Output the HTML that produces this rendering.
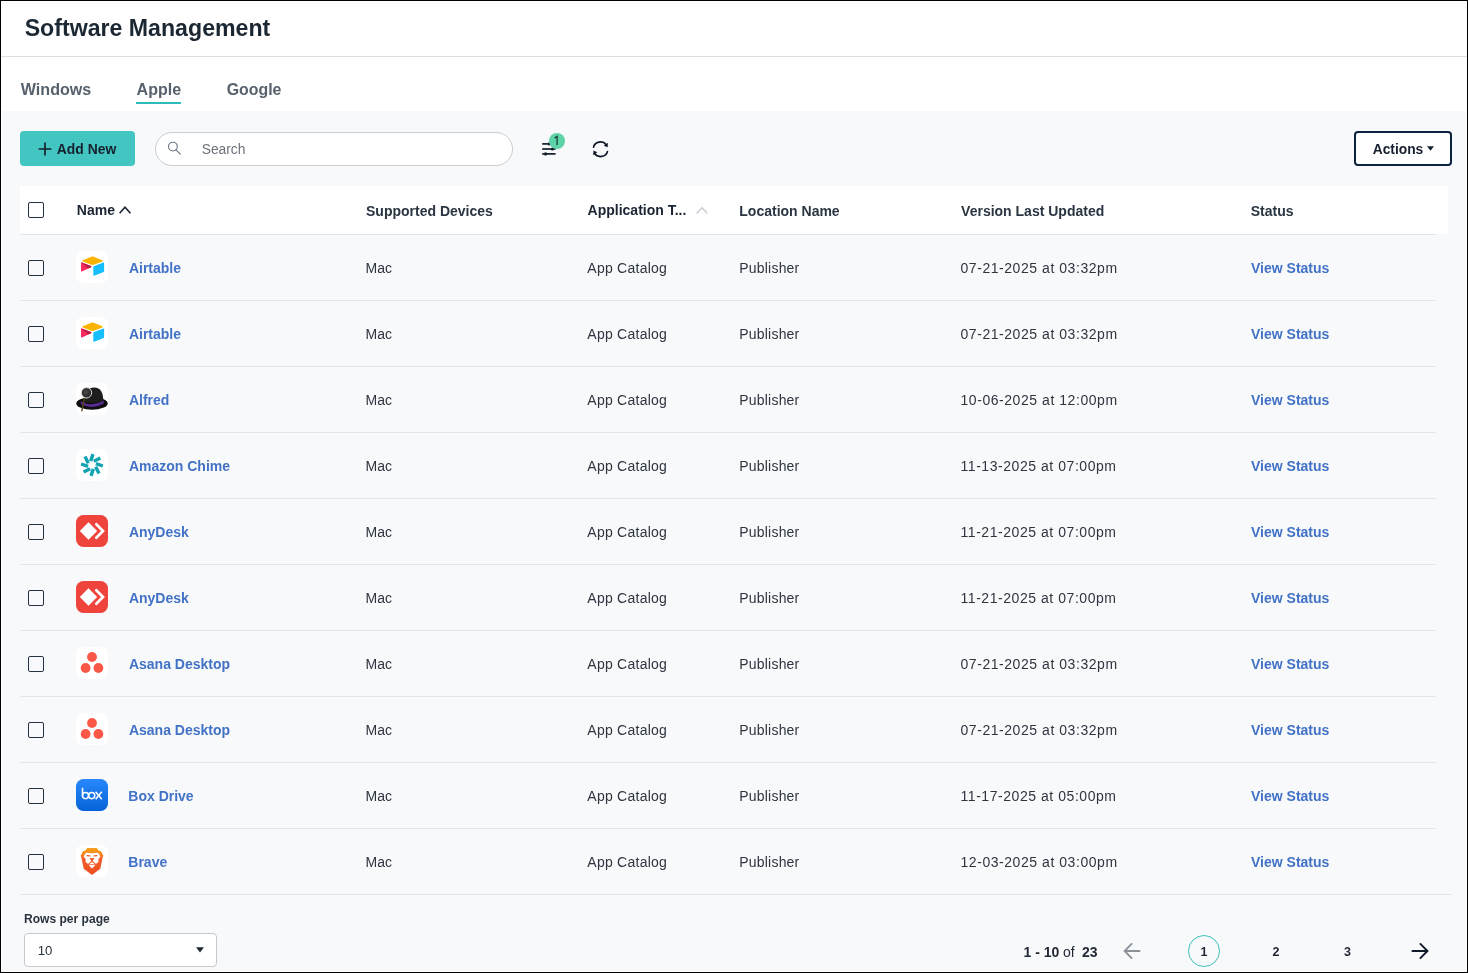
<!DOCTYPE html><html><head><meta charset="utf-8"><style>
*{box-sizing:border-box;margin:0;padding:0}
html,body{width:1468px;height:973px;overflow:hidden;background:#fff}
body{font-family:"Liberation Sans",sans-serif;position:relative}
#frame{position:absolute;left:0;top:0;width:1468px;height:973px;border:1px solid #000;background:#fff}
.abs{position:absolute}
.t{position:absolute;white-space:nowrap}
#wrap{position:absolute;left:0;top:0;width:1468px;height:973px;will-change:transform}
.ico{position:absolute}
.cb{position:absolute;width:16px;height:16px;border:1.5px solid #243142;border-radius:2px;background:transparent}
.hl{position:absolute;height:1px;background:#e1e7e9}
</style></head><body><div id="wrap"><div id="frame"></div>
<div class="abs" style="left:1px;top:56px;width:1466px;height:1px;background:#dcdee1"></div>
<div class="abs" style="left:136px;top:102px;width:45px;height:2px;background:#2dbdb9"></div>
<div class="abs" style="left:2px;top:111px;width:1464px;height:860px;background:#f8f9fb"></div>
<div class="abs" style="left:20px;top:131px;width:115px;height:35px;background:#43c6c2;border-radius:4px"></div>
<svg class="abs" style="left:38px;top:141.5px" width="14" height="14" viewBox="0 0 14 14"><path d="M7 0.6V13.4M0.6 7H13.4" stroke="#17202e" stroke-width="1.7"/></svg>
<div class="abs" style="left:155px;top:132px;width:358px;height:34px;background:#fff;border:1px solid #c9ccd0;border-radius:17px"></div>
<svg class="abs" style="left:166px;top:140px" width="17" height="17" viewBox="0 0 17 17"><circle cx="6.9" cy="6.6" r="4.4" fill="none" stroke="#6f7a86" stroke-width="1.15"/><path d="M10.1 9.8L14.3 14.2" stroke="#6f7a86" stroke-width="1.2" stroke-linecap="round"/></svg>
<svg class="abs" style="left:540px;top:140px" width="18" height="17" viewBox="0 0 18 17">
<g stroke="#131c2b" stroke-width="1.7" fill="#131c2b">
<line x1="2.2" y1="3.9" x2="9.2" y2="3.9"/>
<line x1="2.2" y1="9" x2="15.6" y2="9"/>
<line x1="2.2" y1="13.9" x2="15.6" y2="13.9"/>
</g>
<circle cx="9.4" cy="3.9" r="1.6" fill="#131c2b"/>
<circle cx="12.4" cy="9" r="1.6" fill="#131c2b"/>
<circle cx="5.6" cy="13.9" r="1.6" fill="#131c2b"/>
</svg>
<div class="abs" style="left:549px;top:133px;width:16px;height:16px;border-radius:8px;background:#5dd3a8"></div>
<svg class="abs" style="left:549px;top:133px" width="16" height="16" viewBox="0 0 16 16"><path d="M5.7 4.9 L8.1 3.4 L8.1 12" fill="none" stroke="#1d3a36" stroke-width="1.25"/></svg>
<svg class="abs" style="left:590px;top:138px" width="21" height="21" viewBox="0 0 21 21">
<g fill="none" stroke="#0e1726" stroke-width="1.7" stroke-linecap="round">
<path d="M3.6 9.2 A7 6.2 0 0 1 16.2 6.6"/>
<path d="M17.4 13.6 A7 6.2 0 0 1 4.6 15.6"/>
</g>
<path d="M17.9 4.7 L17.6 9.3 L13.8 7.8 Z" fill="#0e1726"/>
<path d="M3.2 17.2 L3.5 12.6 L7.3 14.2 Z" fill="#0e1726"/>
</svg>
<div class="abs" style="left:1354px;top:131px;width:98px;height:35px;background:#fff;border:2px solid #0b2240;border-radius:4px"></div>
<svg class="abs" style="left:1426px;top:145px" width="9" height="7" viewBox="0 0 9 7"><path d="M1 1.2H8L4.5 5.8Z" fill="#17202e"/></svg>
<div class="abs" style="left:20px;top:186px;width:1428px;height:48px;background:#fff"></div>
<div class="hl" style="left:20px;top:234px;width:1416px"></div>
<div class="cb" style="left:28px;top:202px"></div>
<svg class="abs" style="left:117px;top:203px" width="16" height="13" viewBox="0 0 16 13"><path d="M2.6 10.3L8 4.3L13.4 10.3" fill="none" stroke="#1a2432" stroke-width="1.6"/></svg>
<svg class="abs" style="left:694px;top:203.5px" width="16" height="13" viewBox="0 0 16 13"><path d="M2.6 9.6L8 3.8L13.4 9.6" fill="none" stroke="#c8cdd2" stroke-width="1.4"/></svg>
<div class="cb" style="left:28px;top:260px"></div>
<svg class="ico" style="left:76px;top:251px" width="32" height="32" viewBox="0 0 32 32"><rect width="32" height="32" rx="7" fill="#fff"/>
<g transform="translate(5,5.6) scale(0.1305) translate(-11,-11)">
<path fill="#FCB400" d="M90.039 12.368 24.079 39.66c-3.667 1.519-3.63 6.729.062 8.192l66.235 26.266a24.58 24.58 0 0 0 18.12 0l66.236-26.266c3.69-1.463 3.729-6.673.06-8.191l-65.958-27.293a24.58 24.58 0 0 0-18.795 0"/>
<path fill="#18BFFF" d="M105.312 88.46v65.617c0 3.12 3.147 5.258 6.048 4.108l73.806-28.648a4.42 4.42 0 0 0 2.79-4.108V59.813c0-3.121-3.147-5.258-6.048-4.108l-73.806 28.648a4.42 4.42 0 0 0-2.79 4.108"/>
<path fill="#F82B60" d="m88.078 91.846-21.904 10.576-2.224 1.075-46.238 22.155c-2.93 1.414-6.672-.722-6.672-3.978V60.088c0-1.178.604-2.195 1.414-2.96a5 5 0 0 1 1.12-.84c1.104-.663 2.68-.84 4.02-.31l70.115 27.784c3.564 1.414 3.844 6.408.368 8.087"/>
<path fill="#BA1E45" d="m88.078 91.846-21.904 10.576-53.72-45.295a5 5 0 0 1 1.12-.839c1.104-.663 2.68-.84 4.02-.31l70.115 27.784c3.564 1.414 3.844 6.408.368 8.087"/>
</g></svg>
<div class="hl" style="left:20px;top:300px;width:1416px"></div>
<div class="cb" style="left:28px;top:326px"></div>
<svg class="ico" style="left:76px;top:317px" width="32" height="32" viewBox="0 0 32 32"><rect width="32" height="32" rx="7" fill="#fff"/>
<g transform="translate(5,5.6) scale(0.1305) translate(-11,-11)">
<path fill="#FCB400" d="M90.039 12.368 24.079 39.66c-3.667 1.519-3.63 6.729.062 8.192l66.235 26.266a24.58 24.58 0 0 0 18.12 0l66.236-26.266c3.69-1.463 3.729-6.673.06-8.191l-65.958-27.293a24.58 24.58 0 0 0-18.795 0"/>
<path fill="#18BFFF" d="M105.312 88.46v65.617c0 3.12 3.147 5.258 6.048 4.108l73.806-28.648a4.42 4.42 0 0 0 2.79-4.108V59.813c0-3.121-3.147-5.258-6.048-4.108l-73.806 28.648a4.42 4.42 0 0 0-2.79 4.108"/>
<path fill="#F82B60" d="m88.078 91.846-21.904 10.576-2.224 1.075-46.238 22.155c-2.93 1.414-6.672-.722-6.672-3.978V60.088c0-1.178.604-2.195 1.414-2.96a5 5 0 0 1 1.12-.84c1.104-.663 2.68-.84 4.02-.31l70.115 27.784c3.564 1.414 3.844 6.408.368 8.087"/>
<path fill="#BA1E45" d="m88.078 91.846-21.904 10.576-53.72-45.295a5 5 0 0 1 1.12-.839c1.104-.663 2.68-.84 4.02-.31l70.115 27.784c3.564 1.414 3.844 6.408.368 8.087"/>
</g></svg>
<div class="hl" style="left:20px;top:366px;width:1416px"></div>
<div class="cb" style="left:28px;top:392px"></div>
<svg class="ico" style="left:76px;top:383px" width="32" height="32" viewBox="0 0 32 32"><defs><radialGradient id="alg" cx="0.45" cy="0.45" r="0.6"><stop offset="0" stop-color="#4a4a4a"/><stop offset="1" stop-color="#1e1e1e"/></radialGradient></defs>
<rect width="32" height="32" rx="7" fill="#fff"/>
<ellipse cx="16" cy="20.4" rx="15.7" ry="6.3" fill="#0e0e0e"/>
<path d="M8.8 19.5 C8.8 10 11.5 4.6 18.2 4.6 C24.6 4.6 27.4 9.5 27.4 19.5 Z" fill="#1d1d1d"/>
<path d="M4.6 18.2 Q16 24.6 27.6 17.8 L27.7 20.4 Q16 27.4 5 20.9 Z" fill="#5a2b95"/>
<line x1="8.5" y1="14.8" x2="5.7" y2="28.3" stroke="#5a4816" stroke-width="1.35"/>
<circle cx="10.5" cy="9.8" r="5.2" fill="url(#alg)" stroke="#e4e4e4" stroke-width="0.95"/></svg>
<div class="hl" style="left:20px;top:432px;width:1416px"></div>
<div class="cb" style="left:28px;top:458px"></div>
<svg class="ico" style="left:76px;top:449px" width="32" height="32" viewBox="0 0 32 32"><rect width="32" height="32" rx="7" fill="#fff"/><g transform="translate(16,16)"><line x1="-1.35" y1="-3.9" x2="1.0" y2="-10.9" stroke="#12a3b3" stroke-width="3.4" transform="rotate(0)"/><line x1="-1.35" y1="-3.9" x2="1.0" y2="-10.9" stroke="#12a3b3" stroke-width="3.4" transform="rotate(45)"/><line x1="-1.35" y1="-3.9" x2="1.0" y2="-10.9" stroke="#12a3b3" stroke-width="3.4" transform="rotate(90)"/><line x1="-1.35" y1="-3.9" x2="1.0" y2="-10.9" stroke="#12a3b3" stroke-width="3.4" transform="rotate(135)"/><line x1="-1.35" y1="-3.9" x2="1.0" y2="-10.9" stroke="#12a3b3" stroke-width="3.4" transform="rotate(180)"/><line x1="-1.35" y1="-3.9" x2="1.0" y2="-10.9" stroke="#12a3b3" stroke-width="3.4" transform="rotate(225)"/><line x1="-1.35" y1="-3.9" x2="1.0" y2="-10.9" stroke="#12a3b3" stroke-width="3.4" transform="rotate(270)"/><line x1="-1.35" y1="-3.9" x2="1.0" y2="-10.9" stroke="#12a3b3" stroke-width="3.4" transform="rotate(315)"/></g></svg>
<div class="hl" style="left:20px;top:498px;width:1416px"></div>
<div class="cb" style="left:28px;top:524px"></div>
<svg class="ico" style="left:76px;top:515px" width="32" height="32" viewBox="0 0 32 32"><rect width="32" height="32" rx="7.5" fill="#EF443B"/>
<path d="M12.5 7.2 L21.2 16 L12.5 24.8 L3.8 16 Z" fill="#fff"/>
<path d="M20.3 9.2 L27.0 16 L20.3 22.8" fill="none" stroke="#fff" stroke-width="2.7" stroke-linejoin="miter" stroke-linecap="round"/></svg>
<div class="hl" style="left:20px;top:564px;width:1416px"></div>
<div class="cb" style="left:28px;top:590px"></div>
<svg class="ico" style="left:76px;top:581px" width="32" height="32" viewBox="0 0 32 32"><rect width="32" height="32" rx="7.5" fill="#EF443B"/>
<path d="M12.5 7.2 L21.2 16 L12.5 24.8 L3.8 16 Z" fill="#fff"/>
<path d="M20.3 9.2 L27.0 16 L20.3 22.8" fill="none" stroke="#fff" stroke-width="2.7" stroke-linejoin="miter" stroke-linecap="round"/></svg>
<div class="hl" style="left:20px;top:630px;width:1416px"></div>
<div class="cb" style="left:28px;top:656px"></div>
<svg class="ico" style="left:76px;top:647px" width="32" height="32" viewBox="0 0 32 32"><rect width="32" height="32" rx="7" fill="#fff"/>
<circle cx="16" cy="10" r="4.9" fill="#FB5848"/>
<circle cx="9.6" cy="21" r="4.9" fill="#FB5848"/>
<circle cx="22.4" cy="21" r="4.9" fill="#FB5848"/></svg>
<div class="hl" style="left:20px;top:696px;width:1416px"></div>
<div class="cb" style="left:28px;top:722px"></div>
<svg class="ico" style="left:76px;top:713px" width="32" height="32" viewBox="0 0 32 32"><rect width="32" height="32" rx="7" fill="#fff"/>
<circle cx="16" cy="10" r="4.9" fill="#FB5848"/>
<circle cx="9.6" cy="21" r="4.9" fill="#FB5848"/>
<circle cx="22.4" cy="21" r="4.9" fill="#FB5848"/></svg>
<div class="hl" style="left:20px;top:762px;width:1416px"></div>
<div class="cb" style="left:28px;top:788px"></div>
<svg class="ico" style="left:76px;top:779px" width="32" height="32" viewBox="0 0 32 32"><defs><linearGradient id="boxg" x1="0" y1="0" x2="0" y2="1"><stop offset="0" stop-color="#2A88FD"/><stop offset="1" stop-color="#0562D8"/></linearGradient></defs>
<rect width="32" height="32" rx="7.5" fill="url(#boxg)"/>
<g fill="none" stroke="#fff" stroke-width="1.55">
<line x1="6.5" y1="8.8" x2="6.5" y2="16.6"/>
<circle cx="9.5" cy="16.6" r="3.05"/>
<circle cx="15.7" cy="16.6" r="3.05"/>
<line x1="19.6" y1="12.8" x2="25.8" y2="20.2"/>
<line x1="25.8" y1="12.8" x2="19.6" y2="20.2"/>
</g></svg>
<div class="hl" style="left:20px;top:828px;width:1416px"></div>
<div class="cb" style="left:28px;top:854px"></div>
<svg class="ico" style="left:76px;top:845px" width="32" height="32" viewBox="0 0 32 32"><defs><linearGradient id="brg" x1="0" y1="0" x2="0" y2="1"><stop offset="0" stop-color="#F9A31A"/><stop offset="0.2" stop-color="#F68A1F"/><stop offset="0.42" stop-color="#F15A28"/><stop offset="1" stop-color="#EE4F22"/></linearGradient></defs>
<rect width="32" height="32" rx="7" fill="#fff"/>
<path fill="url(#brg)" d="M11.2 3 L20.8 3 L22.6 5.6 L25 6.2 L27.3 10.6 L26.4 13.4 L24.3 23.8 L16 30 L7.7 23.8 L5.6 13.4 L4.7 10.6 L7 6.2 L9.4 5.6 Z"/>
<path fill="#fff" d="M7.6 11.4 L10 7.7 L16 8.2 L22 7.7 L24.4 11.4 L22.2 14.4 L22.7 16.4 L20.3 18.8 L18 19.6 L16 19 L14 19.6 L11.7 18.8 L9.3 16.4 L9.8 14.4 Z"/>
<path fill="#fff" d="M12.9 20.4 L16 19.8 L19.4 20.2 L16 23.6 Z"/>
<g fill="none" stroke="#F05A28" stroke-width="1.1" stroke-linecap="round">
<path d="M11 10.6 L14 10.9"/><path d="M21 10.6 L18 10.9"/>
<path d="M16 16.2 L13 18.6"/><path d="M16 16.2 L19 18.6"/>
</g>
<path fill="#F05A28" d="M13.4 13.3 L16 13 L18.6 13.3 L16 16.4 Z"/></svg>
<div class="hl" style="left:20px;top:894px;width:1432px"></div>
<div class="abs" style="left:24px;top:933px;width:193px;height:34px;background:#fff;border:1px solid #c5c9ce;border-radius:4px"></div>
<svg class="abs" style="left:195px;top:946px" width="10" height="8" viewBox="0 0 10 8"><path d="M1 1.2H9L5 6.6Z" fill="#1f2833"/></svg>
<svg class="abs" style="left:1122px;top:941px" width="20" height="20" viewBox="0 0 20 20"><g fill="none" stroke="#8b9199" stroke-width="1.8" stroke-linecap="round" stroke-linejoin="round"><path d="M17.6 10H2.6"/><path d="M9.6 2.9L2.6 10L9.6 17.1"/></g></svg>
<div class="abs" style="left:1188px;top:935px;width:32px;height:32px;border:1px solid #3fc2be;border-radius:16px"></div>
<svg class="abs" style="left:1410px;top:941px" width="20" height="20" viewBox="0 0 20 20"><g fill="none" stroke="#111a2a" stroke-width="1.9" stroke-linecap="round" stroke-linejoin="round"><path d="M2.4 10H17.4"/><path d="M10.4 2.9L17.4 10L10.4 17.1"/></g></svg>
<div class="t" id="title" style="left:24.70px;top:15.00px;font-size:23.15px;line-height:26px;font-weight:700;color:#1b2733;">Software Management</div>
<div class="t" id="tab_win" style="left:20.80px;top:80.00px;font-size:16.1px;line-height:18px;font-weight:700;color:#56616c;">Windows</div>
<div class="t" id="tab_apple" style="left:136.60px;top:81.00px;font-size:16.0px;line-height:17px;font-weight:700;color:#56616c;">Apple</div>
<div class="t" id="tab_google" style="left:226.70px;top:81.00px;font-size:15.9px;line-height:17px;font-weight:700;color:#56616c;">Google</div>
<div class="t" id="addnew" style="left:56.80px;top:141.00px;font-size:13.9px;line-height:16px;font-weight:700;color:#17202e;">Add New</div>
<div class="t" id="search" style="left:201.70px;top:141.70px;font-size:13.8px;line-height:15px;font-weight:400;color:#6c737c;">Search</div>
<div class="t" id="actions" style="left:1372.70px;top:142.00px;font-size:13.8px;line-height:15px;font-weight:700;color:#17202e;">Actions</div>
<div class="t" id="h_name" style="left:76.80px;top:202.30px;font-size:14px;line-height:16px;font-weight:700;color:#1a2432;">Name</div>
<div class="t" id="h_sup" style="left:366.00px;top:202.80px;font-size:14px;line-height:16px;font-weight:700;color:#2a3542;">Supported Devices</div>
<div class="t" id="h_app" style="left:587.60px;top:202.30px;font-size:14px;line-height:16px;font-weight:700;color:#1a2432;">Application T...</div>
<div class="t" id="h_loc" style="left:739.30px;top:202.80px;font-size:14px;line-height:16px;font-weight:700;color:#2a3542;">Location Name</div>
<div class="t" id="h_ver" style="left:961.10px;top:202.80px;font-size:14px;line-height:16px;font-weight:700;color:#2a3542;">Version Last Updated</div>
<div class="t" id="h_stat" style="left:1250.70px;top:202.80px;font-size:14px;line-height:16px;font-weight:700;color:#2a3542;">Status</div>
<div class="t" id="r0_name" style="left:128.90px;top:260.10px;font-size:14px;line-height:16px;font-weight:700;color:#4272c6;">Airtable</div>
<div class="t" id="r0_mac" style="left:365.60px;top:260.10px;font-size:14px;line-height:16px;font-weight:400;color:#2e353f;">Mac</div>
<div class="t" id="r0_cat" style="left:587.30px;top:260.10px;font-size:14px;line-height:16px;font-weight:400;color:#2e353f;letter-spacing:0.25px;">App Catalog</div>
<div class="t" id="r0_pub" style="left:739.30px;top:260.10px;font-size:14px;line-height:16px;font-weight:400;color:#2e353f;letter-spacing:0.2px;">Publisher</div>
<div class="t" id="r0_date" style="left:960.50px;top:260.10px;font-size:14px;line-height:16px;font-weight:400;color:#2e353f;letter-spacing:0.55px;">07-21-2025 at 03:32pm</div>
<div class="t" id="r0_view" style="left:1251.00px;top:260.10px;font-size:14px;line-height:16px;font-weight:700;color:#4272c6;">View Status</div>
<div class="t" id="r1_name" style="left:128.90px;top:326.10px;font-size:14px;line-height:16px;font-weight:700;color:#4272c6;">Airtable</div>
<div class="t" id="r1_mac" style="left:365.60px;top:326.10px;font-size:14px;line-height:16px;font-weight:400;color:#2e353f;">Mac</div>
<div class="t" id="r1_cat" style="left:587.30px;top:326.10px;font-size:14px;line-height:16px;font-weight:400;color:#2e353f;letter-spacing:0.25px;">App Catalog</div>
<div class="t" id="r1_pub" style="left:739.30px;top:326.10px;font-size:14px;line-height:16px;font-weight:400;color:#2e353f;letter-spacing:0.2px;">Publisher</div>
<div class="t" id="r1_date" style="left:960.50px;top:326.10px;font-size:14px;line-height:16px;font-weight:400;color:#2e353f;letter-spacing:0.55px;">07-21-2025 at 03:32pm</div>
<div class="t" id="r1_view" style="left:1251.00px;top:326.10px;font-size:14px;line-height:16px;font-weight:700;color:#4272c6;">View Status</div>
<div class="t" id="r2_name" style="left:128.90px;top:392.10px;font-size:14px;line-height:16px;font-weight:700;color:#4272c6;">Alfred</div>
<div class="t" id="r2_mac" style="left:365.60px;top:392.10px;font-size:14px;line-height:16px;font-weight:400;color:#2e353f;">Mac</div>
<div class="t" id="r2_cat" style="left:587.30px;top:392.10px;font-size:14px;line-height:16px;font-weight:400;color:#2e353f;letter-spacing:0.25px;">App Catalog</div>
<div class="t" id="r2_pub" style="left:739.30px;top:392.10px;font-size:14px;line-height:16px;font-weight:400;color:#2e353f;letter-spacing:0.2px;">Publisher</div>
<div class="t" id="r2_date" style="left:960.50px;top:392.10px;font-size:14px;line-height:16px;font-weight:400;color:#2e353f;letter-spacing:0.55px;">10-06-2025 at 12:00pm</div>
<div class="t" id="r2_view" style="left:1251.00px;top:392.10px;font-size:14px;line-height:16px;font-weight:700;color:#4272c6;">View Status</div>
<div class="t" id="r3_name" style="left:128.90px;top:458.10px;font-size:14px;line-height:16px;font-weight:700;color:#4272c6;">Amazon Chime</div>
<div class="t" id="r3_mac" style="left:365.60px;top:458.10px;font-size:14px;line-height:16px;font-weight:400;color:#2e353f;">Mac</div>
<div class="t" id="r3_cat" style="left:587.30px;top:458.10px;font-size:14px;line-height:16px;font-weight:400;color:#2e353f;letter-spacing:0.25px;">App Catalog</div>
<div class="t" id="r3_pub" style="left:739.30px;top:458.10px;font-size:14px;line-height:16px;font-weight:400;color:#2e353f;letter-spacing:0.2px;">Publisher</div>
<div class="t" id="r3_date" style="left:960.50px;top:458.10px;font-size:14px;line-height:16px;font-weight:400;color:#2e353f;letter-spacing:0.55px;">11-13-2025 at 07:00pm</div>
<div class="t" id="r3_view" style="left:1251.00px;top:458.10px;font-size:14px;line-height:16px;font-weight:700;color:#4272c6;">View Status</div>
<div class="t" id="r4_name" style="left:128.90px;top:524.10px;font-size:14px;line-height:16px;font-weight:700;color:#4272c6;">AnyDesk</div>
<div class="t" id="r4_mac" style="left:365.60px;top:524.10px;font-size:14px;line-height:16px;font-weight:400;color:#2e353f;">Mac</div>
<div class="t" id="r4_cat" style="left:587.30px;top:524.10px;font-size:14px;line-height:16px;font-weight:400;color:#2e353f;letter-spacing:0.25px;">App Catalog</div>
<div class="t" id="r4_pub" style="left:739.30px;top:524.10px;font-size:14px;line-height:16px;font-weight:400;color:#2e353f;letter-spacing:0.2px;">Publisher</div>
<div class="t" id="r4_date" style="left:960.50px;top:524.10px;font-size:14px;line-height:16px;font-weight:400;color:#2e353f;letter-spacing:0.55px;">11-21-2025 at 07:00pm</div>
<div class="t" id="r4_view" style="left:1251.00px;top:524.10px;font-size:14px;line-height:16px;font-weight:700;color:#4272c6;">View Status</div>
<div class="t" id="r5_name" style="left:128.90px;top:590.10px;font-size:14px;line-height:16px;font-weight:700;color:#4272c6;">AnyDesk</div>
<div class="t" id="r5_mac" style="left:365.60px;top:590.10px;font-size:14px;line-height:16px;font-weight:400;color:#2e353f;">Mac</div>
<div class="t" id="r5_cat" style="left:587.30px;top:590.10px;font-size:14px;line-height:16px;font-weight:400;color:#2e353f;letter-spacing:0.25px;">App Catalog</div>
<div class="t" id="r5_pub" style="left:739.30px;top:590.10px;font-size:14px;line-height:16px;font-weight:400;color:#2e353f;letter-spacing:0.2px;">Publisher</div>
<div class="t" id="r5_date" style="left:960.50px;top:590.10px;font-size:14px;line-height:16px;font-weight:400;color:#2e353f;letter-spacing:0.55px;">11-21-2025 at 07:00pm</div>
<div class="t" id="r5_view" style="left:1251.00px;top:590.10px;font-size:14px;line-height:16px;font-weight:700;color:#4272c6;">View Status</div>
<div class="t" id="r6_name" style="left:128.90px;top:656.10px;font-size:14px;line-height:16px;font-weight:700;color:#4272c6;">Asana Desktop</div>
<div class="t" id="r6_mac" style="left:365.60px;top:656.10px;font-size:14px;line-height:16px;font-weight:400;color:#2e353f;">Mac</div>
<div class="t" id="r6_cat" style="left:587.30px;top:656.10px;font-size:14px;line-height:16px;font-weight:400;color:#2e353f;letter-spacing:0.25px;">App Catalog</div>
<div class="t" id="r6_pub" style="left:739.30px;top:656.10px;font-size:14px;line-height:16px;font-weight:400;color:#2e353f;letter-spacing:0.2px;">Publisher</div>
<div class="t" id="r6_date" style="left:960.50px;top:656.10px;font-size:14px;line-height:16px;font-weight:400;color:#2e353f;letter-spacing:0.55px;">07-21-2025 at 03:32pm</div>
<div class="t" id="r6_view" style="left:1251.00px;top:656.10px;font-size:14px;line-height:16px;font-weight:700;color:#4272c6;">View Status</div>
<div class="t" id="r7_name" style="left:128.90px;top:722.10px;font-size:14px;line-height:16px;font-weight:700;color:#4272c6;">Asana Desktop</div>
<div class="t" id="r7_mac" style="left:365.60px;top:722.10px;font-size:14px;line-height:16px;font-weight:400;color:#2e353f;">Mac</div>
<div class="t" id="r7_cat" style="left:587.30px;top:722.10px;font-size:14px;line-height:16px;font-weight:400;color:#2e353f;letter-spacing:0.25px;">App Catalog</div>
<div class="t" id="r7_pub" style="left:739.30px;top:722.10px;font-size:14px;line-height:16px;font-weight:400;color:#2e353f;letter-spacing:0.2px;">Publisher</div>
<div class="t" id="r7_date" style="left:960.50px;top:722.10px;font-size:14px;line-height:16px;font-weight:400;color:#2e353f;letter-spacing:0.55px;">07-21-2025 at 03:32pm</div>
<div class="t" id="r7_view" style="left:1251.00px;top:722.10px;font-size:14px;line-height:16px;font-weight:700;color:#4272c6;">View Status</div>
<div class="t" id="r8_name" style="left:128.30px;top:788.10px;font-size:14px;line-height:16px;font-weight:700;color:#4272c6;">Box Drive</div>
<div class="t" id="r8_mac" style="left:365.60px;top:788.10px;font-size:14px;line-height:16px;font-weight:400;color:#2e353f;">Mac</div>
<div class="t" id="r8_cat" style="left:587.30px;top:788.10px;font-size:14px;line-height:16px;font-weight:400;color:#2e353f;letter-spacing:0.25px;">App Catalog</div>
<div class="t" id="r8_pub" style="left:739.30px;top:788.10px;font-size:14px;line-height:16px;font-weight:400;color:#2e353f;letter-spacing:0.2px;">Publisher</div>
<div class="t" id="r8_date" style="left:960.50px;top:788.10px;font-size:14px;line-height:16px;font-weight:400;color:#2e353f;letter-spacing:0.55px;">11-17-2025 at 05:00pm</div>
<div class="t" id="r8_view" style="left:1251.00px;top:788.10px;font-size:14px;line-height:16px;font-weight:700;color:#4272c6;">View Status</div>
<div class="t" id="r9_name" style="left:128.30px;top:854.10px;font-size:14px;line-height:16px;font-weight:700;color:#4272c6;">Brave</div>
<div class="t" id="r9_mac" style="left:365.60px;top:854.10px;font-size:14px;line-height:16px;font-weight:400;color:#2e353f;">Mac</div>
<div class="t" id="r9_cat" style="left:587.30px;top:854.10px;font-size:14px;line-height:16px;font-weight:400;color:#2e353f;letter-spacing:0.25px;">App Catalog</div>
<div class="t" id="r9_pub" style="left:739.30px;top:854.10px;font-size:14px;line-height:16px;font-weight:400;color:#2e353f;letter-spacing:0.2px;">Publisher</div>
<div class="t" id="r9_date" style="left:960.50px;top:854.10px;font-size:14px;line-height:16px;font-weight:400;color:#2e353f;letter-spacing:0.55px;">12-03-2025 at 03:00pm</div>
<div class="t" id="r9_view" style="left:1251.00px;top:854.10px;font-size:14px;line-height:16px;font-weight:700;color:#4272c6;">View Status</div>
<div class="t" id="rpp" style="left:24.00px;top:912.10px;font-size:12.05px;line-height:14px;font-weight:700;color:#2a333d;">Rows per page</div>
<div class="t" id="sel10" style="left:37.70px;top:943.00px;font-size:13.2px;line-height:15px;font-weight:400;color:#2a333d;">10</div>
<div class="t" id="pginfo_a" style="left:1023.50px;top:944.10px;font-size:14px;line-height:16px;font-weight:700;color:#1f2833;">1 - 10</div>
<div class="t" id="pginfo_b" style="left:1063.00px;top:944.10px;font-size:14px;line-height:16px;font-weight:400;color:#1f2833;">of</div>
<div class="t" id="pginfo_c" style="left:1082.00px;top:944.10px;font-size:14px;line-height:16px;font-weight:700;color:#1f2833;">23</div>
<div class="t" id="pg1" style="left:1200.40px;top:944.50px;font-size:12.5px;line-height:14px;font-weight:700;color:#1f2833;">1</div>
<div class="t" id="pg2" style="left:1272.60px;top:944.50px;font-size:12.5px;line-height:14px;font-weight:700;color:#1f2833;">2</div>
<div class="t" id="pg3" style="left:1344.00px;top:944.50px;font-size:12.5px;line-height:14px;font-weight:700;color:#1f2833;">3</div>
</div></body></html>
